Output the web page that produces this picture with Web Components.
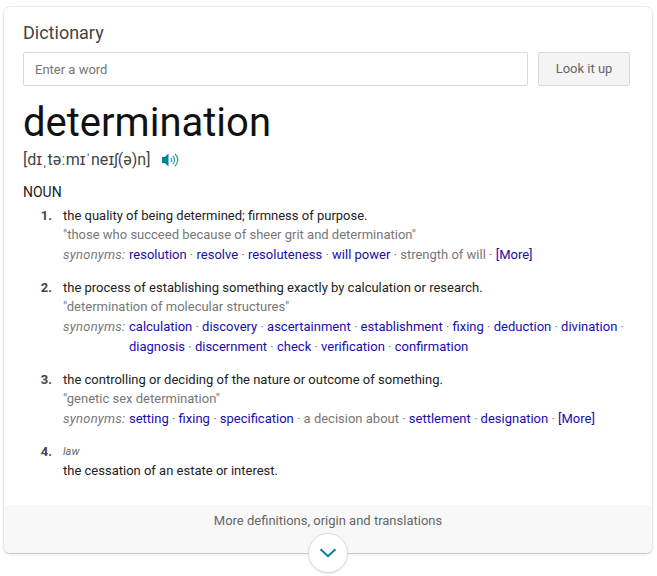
<!DOCTYPE html>
<html lang="en">
<head>
<meta charset="utf-8">
<title>Dictionary</title>
<style>
    body {
        display: flow-root;
        min-height: 576px;
        margin: 0;
        background: #fff;
        font-family: Roboto, "Liberation Sans", sans-serif;
        font-size: 13px;
        color: #222;
    }
</style>
</head>
<body>
<dictionary-card>
    <search-form slot="search" placeholder="Enter a word">Look it up</search-form>
    <word-heading slot="word" word="determination" phonetic="[dɪˌtəːmɪˈneɪʃ(ə)n]"></word-heading>
    <word-sense number="1" synonyms="resolution|resolve|resoluteness|will power|~strength of will|[More]">
        the quality of being determined; firmness of purpose.
        <span slot="example">"those who succeed because of sheer grit and determination"</span>
    </word-sense>
    <word-sense number="2" synonyms="calculation|discovery|ascertainment|establishment|fixing|deduction|divination|diagnosis|discernment|check|verification|confirmation">
        the process of establishing something exactly by calculation or research.
        <span slot="example">"determination of molecular structures"</span>
    </word-sense>
    <word-sense number="3" synonyms="setting|fixing|specification|~a decision about|settlement|designation|[More]">
        the controlling or deciding of the nature or outcome of something.
        <span slot="example">"genetic sex determination"</span>
    </word-sense>
    <word-sense number="4" label="law">
        the cessation of an estate or interest.
    </word-sense>
    <more-footer slot="footer">More definitions, origin and translations</more-footer>
</dictionary-card>

<script>
function attachTemplate(element, html) {
    const template = document.createElement("template");
    template.innerHTML = html;
    element.attachShadow({ mode: "open" });
    element.shadowRoot.appendChild(template.content.cloneNode(true));
}

class DictionaryCard extends HTMLElement {
    constructor() {
        super();
        attachTemplate(this, `
            <style>
                :host {
                    display: flex;
                    flex-direction: column;
                    box-sizing: border-box;
                    width: 648px;
                    height: 546px;
                    margin: 7px 0 0 4px;
                    background: #fff;
                    border-radius: 6px;
                    box-shadow: 0 0 0 1px rgba(0, 0, 0, .07), 0 1px 1px rgba(0, 0, 0, .1), 0 2px 4px rgba(0, 0, 0, .07);
                }
                .content {
                    flex: 1;
                    padding: 14px 22px 0 19px;
                }
                h2 {
                    margin: 0;
                    font-size: 18px;
                    font-weight: 400;
                    line-height: 24px;
                    color: #444;
                }
                .type {
                    margin: 12px 0 5px;
                    font-size: 14px;
                    line-height: 18px;
                }
                .senses {
                    display: flex;
                    flex-direction: column;
                    gap: 13px;
                }
            </style>
            <div class="content">
                <h2>Dictionary</h2>
                <slot name="search"></slot>
                <slot name="word"></slot>
                <div class="type">NOUN</div>
                <div class="senses"><slot></slot></div>
            </div>
            <slot name="footer"></slot>
        `);
    }
}

class SearchForm extends HTMLElement {
    constructor() {
        super();
        attachTemplate(this, `
            <style>
                :host {
                    display: flex;
                    gap: 10px;
                    height: 34px;
                    margin-top: 7px;
                }
                .field, button {
                    box-sizing: border-box;
                    border: 1px solid #d9d9d9;
                    border-radius: 2px;
                    font: inherit;
                }
                .field {
                    flex: 1;
                    min-width: 0;
                    padding: 1px 11px 0;
                    background: #fff;
                    outline: 0;
                }
                .field::placeholder {
                    color: #757575;
                    opacity: 1;
                }
                button {
                    width: 92px;
                    padding: 0 0 2px;
                    background: #f4f4f4;
                    color: #666;
                    cursor: pointer;
                }
            </style>
            <input class="field" type="text">
            <button><slot></slot></button>
        `);
        this.shadowRoot.querySelector("input").placeholder = this.getAttribute("placeholder");
    }
}

class WordHeading extends HTMLElement {
    constructor() {
        super();
        attachTemplate(this, `
            <style>
                :host {
                    display: block;
                }
                h1 {
                    margin: 13px 0 0;
                    font-size: 40px;
                    font-weight: 400;
                    line-height: 48px;
                    color: #111;
                }
                .pronunciation {
                    display: flex;
                    align-items: center;
                    gap: 11px;
                    height: 24px;
                    font-size: 16px;
                    letter-spacing: .05px;
                    color: #444;
                }
                svg {
                    display: block;
                    margin-top: 2px;
                }
            </style>
            <h1></h1>
            <div class="pronunciation">
                <span></span>
                <svg width="17" height="14" viewBox="0 0 17 14">
                    <path d="M0 4h2.7L6.5.5v13L2.7 10H0z" fill="#00809d"/>
                    <path d="M8.8 4.8Q10.6 7 8.8 9.2M10.8 2.8Q14.4 7 10.8 11.2M13 .8Q18.6 7 13 13.2" fill="none" stroke="#3c9fb5" stroke-width="1.3"/>
                </svg>
            </div>
        `);
        this.shadowRoot.querySelector("h1").innerText = this.getAttribute("word");
        this.shadowRoot.querySelector("span").innerText = this.getAttribute("phonetic");
    }
}

class WordSense extends HTMLElement {
    constructor() {
        super();
        attachTemplate(this, `
            <style>
                :host {
                    display: grid;
                    grid-template-columns: 29px 1fr;
                    column-gap: 11px;
                    line-height: 19px;
                }
                .number {
                    text-align: right;
                    font-weight: 700;
                    color: #444;
                }
                .label {
                    font-size: 11px;
                    font-style: italic;
                    color: #666;
                }
                .example {
                    color: #777;
                }
                .synonyms {
                    display: flex;
                    padding-top: 1px;
                    line-height: 20px;
                    color: #777;
                }
                .synonyms i {
                    flex: none;
                    width: 66px;
                    letter-spacing: .25px;
                }
                a {
                    color: #1a0dab;
                    white-space: nowrap;
                }
            </style>
            <div class="number"></div>
            <div>
                <div class="label"></div>
                <div><slot></slot></div>
                <div class="example"><slot name="example"></slot></div>
                <div class="synonyms"><i>synonyms:</i><div class="list"></div></div>
            </div>
        `);
        const root = this.shadowRoot;
        root.querySelector(".number").innerText = this.getAttribute("number") + ".";

        if (this.hasAttribute("label")) {
            root.querySelector(".label").innerText = this.getAttribute("label");
        } else {
            root.querySelector(".label").remove();
        }

        // words starting with ~ have no entry of their own, so no link
        if (this.hasAttribute("synonyms")) {
            root.querySelector(".list").innerHTML = this.getAttribute("synonyms")
                .split("|")
                .map((word) => word.startsWith("~") ? word.slice(1) : `<a>${word}</a>`)
                .join(" · ");
        } else {
            root.querySelector(".synonyms").remove();
        }
    }
}

class MoreFooter extends HTMLElement {
    constructor() {
        super();
        attachTemplate(this, `
            <style>
                :host {
                    position: relative;
                    display: block;
                    box-sizing: border-box;
                    height: 48px;
                    padding-top: 6px;
                    border-radius: 0 0 6px 6px;
                    background: #f8f8f8;
                    color: #666;
                    line-height: 19px;
                    text-align: center;
                }
                .expand {
                    position: absolute;
                    left: 50%;
                    bottom: -20px;
                    display: flex;
                    align-items: center;
                    justify-content: center;
                    box-sizing: border-box;
                    width: 40px;
                    height: 40px;
                    margin-left: -20px;
                    padding: 0;
                    border: 1px solid #dcdcdc;
                    border-radius: 50%;
                    background: #fff;
                    box-shadow: 0 1px 2px rgba(0, 0, 0, .1);
                }
            </style>
            <slot></slot>
            <button class="expand" aria-label="Expand">
                <svg width="18" height="10" viewBox="0 0 18 10">
                    <path d="M1.5 1.2L9 8.2l7.5-7" fill="none" stroke="#00809d" stroke-width="2"/>
                </svg>
            </button>
        `);
    }
}

window.customElements.define("dictionary-card", DictionaryCard);
window.customElements.define("search-form", SearchForm);
window.customElements.define("word-heading", WordHeading);
window.customElements.define("word-sense", WordSense);
window.customElements.define("more-footer", MoreFooter);
</script>
</body>
</html>
